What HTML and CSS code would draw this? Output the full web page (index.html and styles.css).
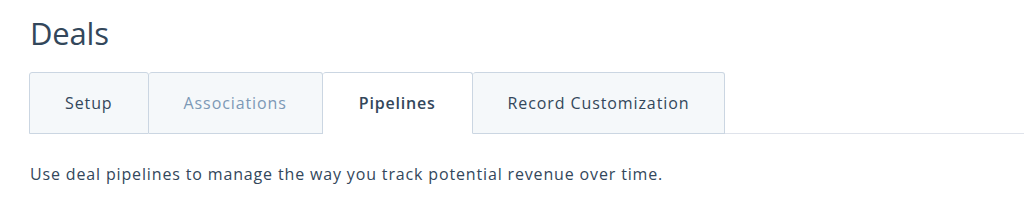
FILE: index.html
```html
<!DOCTYPE html>
<html lang="en">
<head>
  <meta charset="UTF-8">
  <title>Deals</title>
  <link rel="stylesheet" href="styles.css">
</head>
<body>
  <div class="page">
    <h1>Deals</h1>
    <div class="tabs">
      <div class="tab">Setup</div>
      <div class="tab disabled">Associations</div>
      <div class="tab active">Pipelines</div>
      <div class="tab">Record Customization</div>
      <div class="tab-rest"></div>
    </div>
    <p class="intro">Use deal pipelines to manage the way you track potential revenue over time.</p>
  </div>
</body>
</html>
```

FILE: styles.css
```css
body {
  margin: 0;
  font-family: "Open Sans", sans-serif;
  color: #33475b;
  background: #fff;
}
.page {
  padding: 14px 0 0 29px;
}
h1 {
  margin: 0 0 20px 1px;
  font-size: 31px;
  font-weight: 400;
  line-height: 38px;
  letter-spacing: -0.2px;
}
.tabs {
  display: flex;
  align-items: flex-end;
}
.tab {
  height: 60px;
  padding: 0 35px;
  display: flex;
  align-items: center;
  font-size: 16px;
  letter-spacing: 0.9px;
  background: #f5f8fa;
  border: 1px solid #cbd6e2;
  border-left: none;
  border-radius: 3px 3px 0 0;
}
.tab:first-child {
  border-left: 1px solid #cbd6e2;
}
.tab.disabled {
  color: #7c98b6;
}
.tab.active {
  padding: 0 36px;
  background: #fff;
  font-weight: 600;
  letter-spacing: 0.8px;
  border-bottom-color: #fff;
}
.tab-rest {
  flex: 1;
  border-bottom: 1px solid #dfe3eb;
}
.intro {
  margin: 29px 0 0 1px;
  font-size: 16px;
  letter-spacing: 0.85px;
}
```
